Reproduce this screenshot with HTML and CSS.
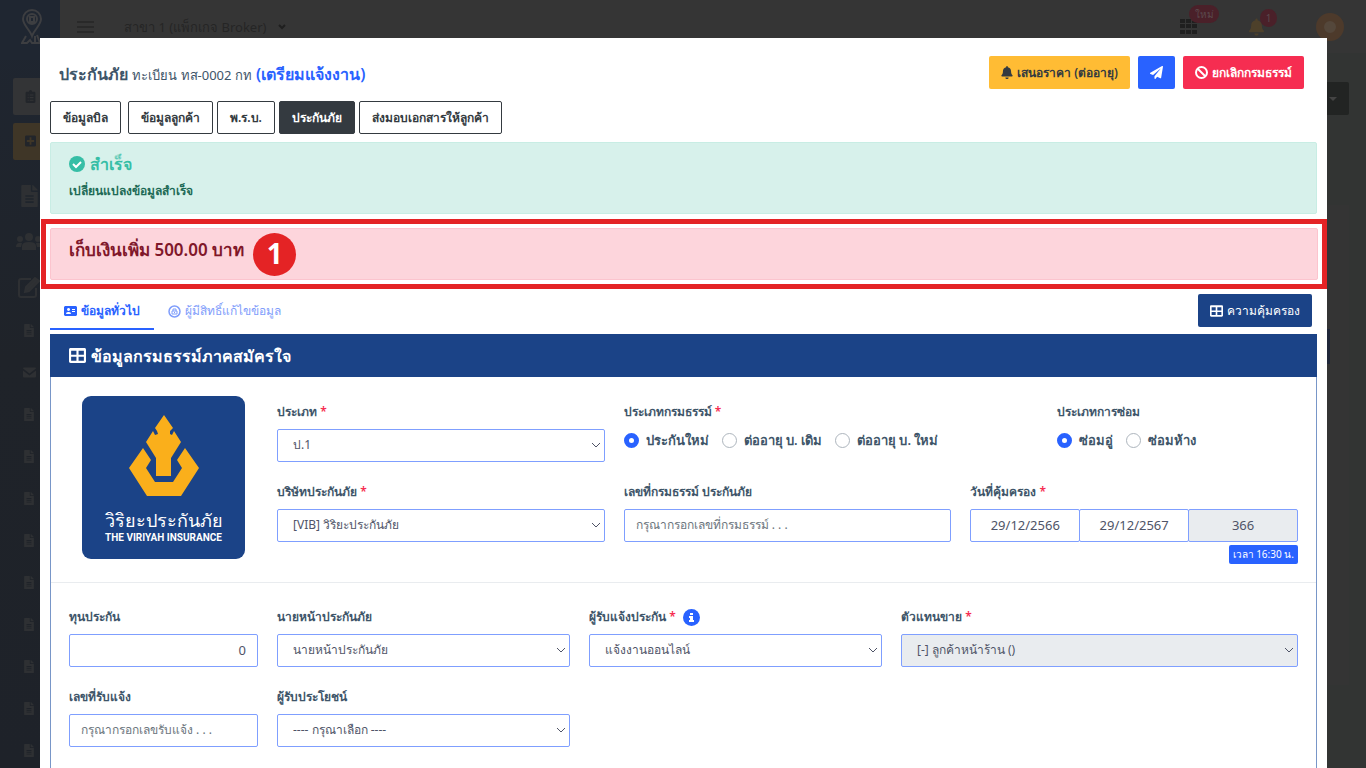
FILE: index.html
```
<!DOCTYPE html>
<html lang="th">
<head>
<meta charset="utf-8">
<meta name="viewport" content="width=device-width, initial-scale=1">
<title>ประกันภัย ทส-0002 กท</title>
<link rel="stylesheet" href="styles.css">
</head>
<body>
<svg class="sprite" aria-hidden="true">
  <symbol id="i-file" viewBox="0 0 384 512"><path fill-rule="evenodd" d="M224 136V0H24C11 0 0 11 0 24v464c0 13 11 24 24 24h336c13 0 24-11 24-24V160H248c-13 0-24-11-24-24zM96 236h192v36H96zm0 72h192v36H96zm0 72h192v36H96zM384 122v6H256V0h6c6 0 12 3 17 7l98 98c4 4 7 10 7 17z"/></symbol>
  <symbol id="i-bell" viewBox="0 0 448 512"><path d="M224 512c35 0 64-29 64-64H160c0 35 29 64 64 64zm215-150c-19-20-55-51-55-154 0-78-54-140-128-155V32a32 32 0 0 0-64 0v21C118 68 64 130 64 208c0 103-36 134-55 154-6 7-9 14-9 22 0 16 13 32 32 32h384c19 0 32-16 32-32 0-8-3-15-9-22z"/></symbol>
  <symbol id="i-table" viewBox="0 0 512 448"><path fill-rule="evenodd" d="M464 0H48C21 0 0 21 0 48v352c0 27 21 48 48 48h416c27 0 48-21 48-48V48c0-27-21-48-48-48zM224 384H64v-120h160zm0-184H64V80h160zm224 184H288v-120h160zm0-184H288V80h160z"/></symbol>
</svg>

<div class="app">
  <aside class="sidebar">
    <div class="brand">
      <svg width="22" height="37" viewBox="0 0 22 37" fill="none" stroke="currentColor" stroke-width="2"><path d="M11 27C9 21 2 16 2 10a9 9 0 0 1 18 0c0 6-7 11-9 17z"/><circle cx="11" cy="10" r="5"/><path d="M9 8h4v5H9zM5 27l-4 7h5l3-3 2 3h8l-3-8M14 27v7"/></svg>
    </div>
    <div class="tile tile-grey"><svg width="11" height="13" viewBox="0 0 384 512"><path fill="currentColor" fill-rule="evenodd" d="M336 64h-80a64 64 0 0 0-128 0H48C22 64 0 86 0 112v352c0 26 22 48 48 48h288c26 0 48-22 48-48V112c0-26-22-48-48-48zM80 180h40v40H80zm80 0h150v40H160zM80 280h40v40H80zm80 0h150v40H160zM80 380h40v40H80zm80 0h150v40H160z"/></svg></div>
    <div class="tile tile-gold"><svg width="11" height="12" viewBox="0 0 12 12"><path fill="currentColor" fill-rule="evenodd" d="M1 0h10l1 1v10l-1 1H1l-1-1V1zM5 2v3H2v2h3v3h2V7h3V5H7V2z"/></svg></div>
    <nav class="side-nav">
      <svg width="17" height="22"><use href="#i-file"/></svg>
      <svg width="26" height="17" viewBox="0 0 26 17" fill="currentColor"><circle cx="13" cy="4" r="4"/><circle cx="4" cy="6" r="3"/><circle cx="22" cy="6" r="3"/><path d="M6 17v-4q0-4 7-4t7 4v4zM0 14q0-5 6-4l-1 4zM26 14q0-5-6-4l1 4z"/></svg>
      <svg width="22" height="22" viewBox="0 0 22 22" fill="none" stroke="currentColor" stroke-width="2"><path d="M13 3H3Q1 3 1 5v14q0 2 2 2h13q2 0 2-2v-7"/><path class="solid" d="M8 11l9-9 4 3-10 10-4 1z"/></svg>
      <svg width="10" height="13"><use href="#i-file"/></svg>
      <svg width="13" height="13" viewBox="0 -1 13 12"><path d="M0 1q0-1 1-1h11q1 0 1 1L6.500 6zM0 3l6.500 5L13 3v6q0 1-1 1H1q-1 0-1-1z"/></svg>
      <svg width="10" height="13"><use href="#i-file"/></svg>
      <svg width="10" height="13"><use href="#i-file"/></svg>
      <svg width="10" height="13"><use href="#i-file"/></svg>
      <svg width="10" height="13"><use href="#i-file"/></svg>
      <svg width="10" height="13"><use href="#i-file"/></svg>
      <svg width="10" height="13"><use href="#i-file"/></svg>
      <svg width="10" height="13"><use href="#i-file"/></svg>
      <svg width="10" height="13"><use href="#i-file"/></svg>
      <svg width="10" height="13"><use href="#i-file"/></svg>
    </nav>
  </aside>
  <div class="workspace">
    <header class="topbar">
      <svg width="17" height="12" viewBox="0 0 17 12" stroke="currentColor" stroke-width="1"><path d="M0 1h17M0 6h17M0 11h17"/></svg>
      <span class="branch">สาขา 1 (แพ็กเกจ Broker)</span>
      <svg width="8" height="6" viewBox="0 0 8 6" fill="none" stroke="currentColor" stroke-width="2"><path d="M1 1l3 3 3-3"/></svg>
      <div class="top-tools">
        <span class="tool"><svg width="17" height="15" viewBox="0 0 17 15" fill="currentColor"><path d="M0 0h5v4H0zM6 0h5v4H6zM12 0h5v4h-5zM0 5h5v4H0zM6 5h5v4H6zM12 5h5v4h-5zM0 11h5v4H0zM6 11h5v4H6zM12 11h5v4h-5z"/></svg><b class="pill pill-new">ใหม่</b></span>
        <span class="tool tool-bell"><svg width="15" height="18"><use href="#i-bell"/></svg><b class="pill pill-count">1</b></span>
        <span class="avatar"></span>
      </div>
    </header>
    <div class="back-content">
      <span class="back-menu"><svg width="8" height="4" viewBox="0 0 8 4"><path d="M0 0h8L4 4z"/></svg></span>
      <div class="back-panel"><span class="back-button"></span></div>
    </div>
  </div>
</div>

<main class="modal" role="dialog" aria-labelledby="title">
  <header class="modal-head">
    <h1 id="title" class="title">ประกันภัย <small>ทะเบียน ทส-0002 กท</small> <span class="status">(เตรียมแจ้งงาน)</span></h1>
    <div class="actions">
      <button class="btn btn-warning" type="button"><svg width="12" height="13"><use href="#i-bell"/></svg>เสนอราคา (ต่ออายุ)</button>
      <button class="btn btn-primary" type="button" aria-label="ส่ง"><svg width="13" height="13" viewBox="0 0 512 512"><path d="M476 3L13 270c-18 10-16 36 2 43l106 45L408 105c6-5 14 3 9 8L176 407v80c0 24 28 33 43 16l63-77 124 52c15 6 31-3 33-19l72-432c3-20-18-35-35-24z"/></svg></button>
      <button class="btn btn-danger" type="button"><svg width="13" height="13" viewBox="0 0 13 13" fill="none" stroke="currentColor" stroke-width="2"><circle cx="6.500" cy="6.500" r="5.500"/><path d="M3 3l7 7"/></svg>ยกเลิกกรมธรรม์</button>
    </div>
  </header>

  <nav class="steps">
    <button class="step step-first" type="button">ข้อมูลบิล</button>
    <button class="step" type="button">ข้อมูลลูกค้า</button>
    <button class="step" type="button">พ.ร.บ.</button>
    <button class="step step-active" type="button">ประกันภัย</button>
    <button class="step" type="button">ส่งมอบเอกสารให้ลูกค้า</button>
  </nav>

  <section class="alert alert-success">
    <h2 class="alert-title"><svg width="16" height="16" viewBox="0 0 16 16"><circle cx="8" cy="8" r="8"/><path d="M4 8l3 3 5-5" fill="none" stroke="#fff" stroke-width="2"/></svg>สำเร็จ</h2>
    <p class="alert-text">เปลี่ยนแปลงข้อมูลสำเร็จ</p>
  </section>

  <div class="callout">
    <section class="alert alert-danger">
      <strong class="due">เก็บเงินเพิ่ม 500.00 บาท</strong>
      <span class="callout-number">1</span>
    </section>
  </div>

  <div class="tab-row">
    <nav class="tabs">
      <a class="tab tab-active" href="#general"><svg width="13" height="10" viewBox="0 0 13 10"><path fill-rule="evenodd" d="M1 0h11l1 1v8l-1 1H1L0 9V1zM2 8h5Q7 6 5 6H4Q2 6 2 8zM4.500 2a1.500 1.500 0 1 0 .1 0zM8 3v1h3V3zM8 5v1h3V5z"/></svg>ข้อมูลทั่วไป</a>
      <a class="tab" href="#rights"><svg width="13" height="13" viewBox="0 0 13 13" fill="none" stroke="currentColor"><circle cx="6.500" cy="6.500" r="5.500" stroke-width="1.500"/><path d="M4 6h5v3H4zM5 6V4h3v2M6.500 7v1"/></svg>ผู้มีสิทธิ์แก้ไขข้อมูล</a>
    </nav>
    <button class="btn btn-navy" type="button"><svg width="13" height="12"><use href="#i-table"/></svg>ความคุ้มครอง</button>
  </div>

  <section class="card" id="general">
    <h2 class="card-head"><svg width="17" height="15"><use href="#i-table"/></svg>ข้อมูลกรมธรรม์ภาคสมัครใจ</h2>
    <form>
      <div class="grid section-top">
        <div class="span-2 logo-cell">
          <div class="logo">
            <svg class="logo-mark" viewBox="0 0 70 82"><path d="M35 0l9 13-3 3v3l2 1 2-4 7 11-10 16v18H27V43L17 27l7-11 2 4 3-1-1-3-2-3z"/><path d="M14 33l8 12-5 8 9 14h18l9-14-5-8 8-12 14 20-18 28H18L0 53z"/></svg>
            <span class="logo-thai">วิริยะประกันภัย</span>
            <span class="logo-latin">THE VIRIYAH INSURANCE</span>
          </div>
        </div>
        <div class="span-10 grid fields-main">
          <div class="field span-4"><label for="type">ประเภท <i>*</i></label><select id="type" class="control"><option>ป.1</option></select></div>
          <fieldset class="field span-5"><legend>ประเภทกรมธรรม์ <i>*</i></legend>
            <div class="radios">
              <label><input type="radio" name="policy" checked>ประกันใหม่</label>
              <label><input type="radio" name="policy">ต่ออายุ บ. เดิม</label>
              <label><input type="radio" name="policy">ต่ออายุ บ. ใหม่</label>
            </div>
          </fieldset>
          <fieldset class="field span-3"><legend>ประเภทการซ่อม</legend>
            <div class="radios">
              <label><input type="radio" name="repair" checked>ซ่อมอู่</label>
              <label><input type="radio" name="repair">ซ่อมห้าง</label>
            </div>
          </fieldset>
          <div class="field span-4"><label for="company">บริษัทประกันภัย <i>*</i></label><select id="company" class="control"><option>[VIB] วิริยะประกันภัย</option></select></div>
          <div class="field span-4"><label for="policyno">เลขที่กรมธรรม์ ประกันภัย</label><input id="policyno" class="control" type="text" placeholder="กรุณากรอกเลขที่กรมธรรม์ . . ."></div>
          <div class="field span-4"><label for="start">วันที่คุ้มครอง <i>*</i></label>
            <div class="dates">
              <input id="start" class="control" type="text" value="29/12/2566">
              <input class="control" type="text" value="29/12/2567" aria-label="วันสิ้นสุด">
              <input class="control" type="text" value="366" aria-label="จำนวนวัน" disabled>
            </div>
            <span class="time">เวลา 16:30 น.</span>
          </div>
        </div>
      </div>
      <div class="grid section-bottom">
        <div class="field span-2"><label for="sum">ทุนประกัน</label><input id="sum" class="control control-number" type="text" value="0"></div>
        <div class="field span-3"><label for="broker">นายหน้าประกันภัย</label><select id="broker" class="control"><option>นายหน้าประกันภัย</option></select></div>
        <div class="field span-3"><label for="receiver">ผู้รับแจ้งประกัน <i>*</i> <svg class="info" width="17" height="17" viewBox="0 0 17 17"><circle cx="8.500" cy="8.500" r="8.500" fill="#2962ff"/><path fill="#fff" d="M7 4h3v2H7zM6 7h4v4h1v2H6v-2h1V9H6z"/></svg></label><select id="receiver" class="control"><option>แจ้งงานออนไลน์</option></select></div>
        <div class="field span-4"><label for="agent">ตัวแทนขาย <i>*</i></label><select id="agent" class="control" disabled><option>[-] ลูกค้าหน้าร้าน ()</option></select></div>
        <div class="field span-2"><label for="notice">เลขที่รับแจ้ง</label><input id="notice" class="control" type="text" placeholder="กรุณากรอกเลขรับแจ้ง . . ."></div>
        <div class="field span-3"><label for="benefit">ผู้รับประโยชน์</label><select id="benefit" class="control"><option>---- กรุณาเลือก ----</option></select></div>
      </div>
    </form>
  </section>
</main>
</body>
</html>
```

FILE: styles.css
```
* { box-sizing: border-box; }

:root {
  --ink: #3e5569;
  --blue: #2962ff;
  --navy: #1b4387;
  --line: #7f9fff;
}

body {
  margin: 0;
  height: 100vh;
  overflow: hidden;
  background: #323433;
  color: var(--ink);
  font: 12px/20px "Noto Sans", "Open Sans", sans-serif;
}

button, input, select { font: inherit; color: inherit; }
h1, h2, p, fieldset { margin: 0; padding: 0; border: 0; }
.sprite { position: absolute; width: 0; height: 0; }
svg { fill: currentColor; flex: none; }
svg[fill="none"] { fill: none; }
.solid { fill: currentColor; }

/* Dimmed page behind the dialog */
.app { display: flex; height: 100vh; }
.sidebar {
  width: 60px;
  flex: none;
  overflow: hidden;
  background: linear-gradient(#1f2631, #1f2329 360px, #1e2229);
  color: #2e3033;
}
.brand { height: 60px; padding: 9px 0 0 21px; color: #3d3e41; background: #1f2631; }
.tile { height: 37px; margin: 18px 0 0 13px; padding: 12px; color: #22252a; background: #333436; border-radius: 2px 0 0 2px; }
.tile-gold { margin-top: 8px; background: #3f3627; }
.tile svg { display: block; }
.side-nav { display: flex; flex-direction: column; align-items: center; padding: 25px 2px 0 0; gap: 26px; }
.side-nav svg:nth-child(n+4) { margin-bottom: 3px; }
.workspace { flex: 1; min-width: 0; }
.topbar { display: flex; align-items: center; height: 53px; padding: 0 22px 0 17px; background: #353535; color: #1f1f1f; font-size: 13px; }
.branch { margin: 0 12px 0 30px; color: #252525; }
.top-tools { display: flex; align-items: center; margin-left: auto; }
.tool { position: relative; display: flex; }
.tool-bell { margin: 0 52px; color: #4d402a; }
.pill { position: absolute; border-radius: 9px; background: #4a2029; color: #5a4a4d; font-size: 10px; font-weight: 400; line-height: 18px; text-align: center; }
.pill-new { left: 9px; top: -14px; width: 30px; }
.pill-count { left: 11px; top: -9px; width: 17px; }
.avatar { width: 28px; height: 28px; border: 8px solid #4d3a2b; border-radius: 50%; background: #54473b; }
.back-content { display: flex; flex-direction: column; align-items: flex-end; padding: 29px 17px; }
.back-menu { display: flex; align-items: center; justify-content: flex-end; width: 44px; height: 33px; padding-right: 12px; border-radius: 2px; background: #222423; color: #444; }
.back-panel { width: 100%; height: 480px; margin-top: 90px; background: #343434; }
.back-button { float: right; width: 40px; height: 35px; margin: 124px 19px 0 0; background: #20283a; }

/* Dialog */
.modal {
  position: fixed;
  inset: 38px 39px 0 40px;
  padding: 18px 10px 0;
  overflow: hidden;
  background: #fff;
}
.modal-head { display: flex; justify-content: space-between; align-items: center; padding: 0 13px 0 9px; }
.title { padding-top: 4px; font-size: 16px; line-height: 28px; font-weight: 600; }
.title small { font-size: 13px; font-weight: 400; }
.status { color: var(--blue); }
.actions { display: flex; gap: 8px; }
.btn { display: flex; align-items: center; justify-content: center; gap: 4px; height: 33px; padding: 0 12px; border: 0; border-radius: 2px; font-weight: 600; color: #fff; white-space: nowrap; }
.btn-warning { background: #ffbc34; color: #343a40; }
.btn-primary { background: var(--blue); }
.btn-danger { background: #f62d51; }
.btn-navy { background: var(--navy); font-weight: 500; }

.steps { display: flex; gap: 4px; margin-top: 12px; }
.step { height: 33px; padding: 0 12px; border: 1px solid #343a40; border-radius: 2px; background: #fff; color: #343a40; font-weight: 600; white-space: nowrap; }
.step-first { margin-right: 3px; }
.step-active { background: #343a40; color: #fff; }

.alert { border: 1px solid; border-radius: 2px; padding: 10px 18px; }
.alert-success { height: 72px; margin-top: 8px; background: #d7f1eb; border-color: #c8ede4; color: #1d6a56; }
.alert-title { display: flex; align-items: center; gap: 5px; font-size: 16px; line-height: 22px; font-weight: 600; color: #36bea6; }
.alert-text { margin-top: 6px; font-weight: 600; }
.callout { margin: 5px -10px 0 -9px; padding: 4px; border: 5px solid #e42325; }
.alert-danger { display: flex; align-items: center; gap: 9px; height: 52px; padding-top: 0; padding-bottom: 0; background: #fdd5dc; border-color: #fcc4ce; color: #80172a; }
.due { padding-bottom: 8px; font-size: 17px; font-weight: 600; }
.callout-number { width: 43px; height: 43px; border-radius: 50%; background: #e42325; color: #fff; font: 700 28px/41px "Noto Sans", sans-serif; text-align: center; }

.tab-row { display: flex; justify-content: space-between; align-items: flex-start; padding: 5px 5px 0 0; height: 45px; }
.tabs { display: flex; }
.tab { display: flex; align-items: center; gap: 4px; height: 36px; padding: 0 14px 2px; color: #7f9dfb; text-decoration: none; font-weight: 500; }
.tab-active { color: var(--blue); border-bottom: 2px solid var(--blue); padding-bottom: 0; font-weight: 600; }

.card { min-height: 460px; border: 1px solid #7896c8; }
.card-head { display: flex; align-items: center; gap: 5px; height: 43px; margin: -1px -1px 0; padding: 0 19px; background: var(--navy); color: #fff; font-size: 16px; font-weight: 600; }
.grid { display: grid; grid-template-columns: repeat(12, minmax(0, 1fr)); column-gap: 19px; }
.span-2 { grid-column: span 2; }
.span-3 { grid-column: span 3; }
.span-4 { grid-column: span 4; }
.span-5 { grid-column: span 5; }
.span-10 { grid-column: span 10; }
.section-top { padding: 19px 18px 18px; border-bottom: 1px solid #e9ecef; }
.fields-main { row-gap: 19px; padding-top: 5px; }
.section-bottom { padding: 23px 18px; row-gap: 19px; }
.field { min-width: 0; font-weight: 600; }
.field > label, legend { display: block; height: 22px; margin-bottom: 6px; padding: 0; line-height: 22px; white-space: nowrap; }
.field i { color: #f62d51; font-style: normal; }
.control { display: block; width: 100%; height: 33px; margin: 0; padding: 0 11px 2px; border: 1px solid var(--line); border-radius: 2px; background: #fff; color: #4f5467; font-weight: 400; outline: 0; }
.control::placeholder { color: #6c757d; opacity: 1; }
select.control { appearance: none; padding: 0 20px 2px 15px; background: #fff url("data:image/svg+xml,%3Csvg xmlns='http://www.w3.org/2000/svg' width='9' height='6' fill='none' stroke='%234f5467'%3E%3Cpath d='M0 0l4 4 4-4'/%3E%3C/svg%3E") right 3px center no-repeat; }
.control:disabled { background-color: #e9ecef; opacity: 1; }
.control-number { text-align: right; font-size: 13px; }
.radios { display: flex; gap: 13px; height: 26px; align-items: center; padding-bottom: 4px; white-space: nowrap; font-size: 13px; }
.radios label { display: flex; align-items: center; gap: 7px; }
.radios input { appearance: none; width: 15px; height: 15px; margin: 0; border: 1px solid #adb5bd; border-radius: 50%; background: #fff; }
.radios input:checked { border: 5px solid var(--blue); }
.dates { display: flex; }
.dates .control { flex: 1; min-width: 0; text-align: center; font-size: 13px; }
.dates .control + .control { margin-left: -1px; }
.time { display: block; width: max-content; margin: 3px 0 0 auto; padding: 0 4px; background: var(--blue); color: #fff; border-radius: 2px; font-size: 10px; font-weight: 400; line-height: 19px; }
.info { margin-left: 4px; vertical-align: middle; }

.logo-cell { display: flex; justify-content: center; align-items: flex-start; }
.logo { display: flex; flex-direction: column; align-items: center; width: 163px; height: 163px; padding-top: 19px; border-radius: 9px; background: var(--navy); color: #fff; white-space: nowrap; }
.logo-mark { width: 70px; height: 82px; fill: #faaf1b; }
.logo-thai { margin-top: 11px; font-size: 18px; line-height: 24px; font-weight: 500; }
.logo-latin { font: 700 10px/12px "Roboto", sans-serif; }
```
